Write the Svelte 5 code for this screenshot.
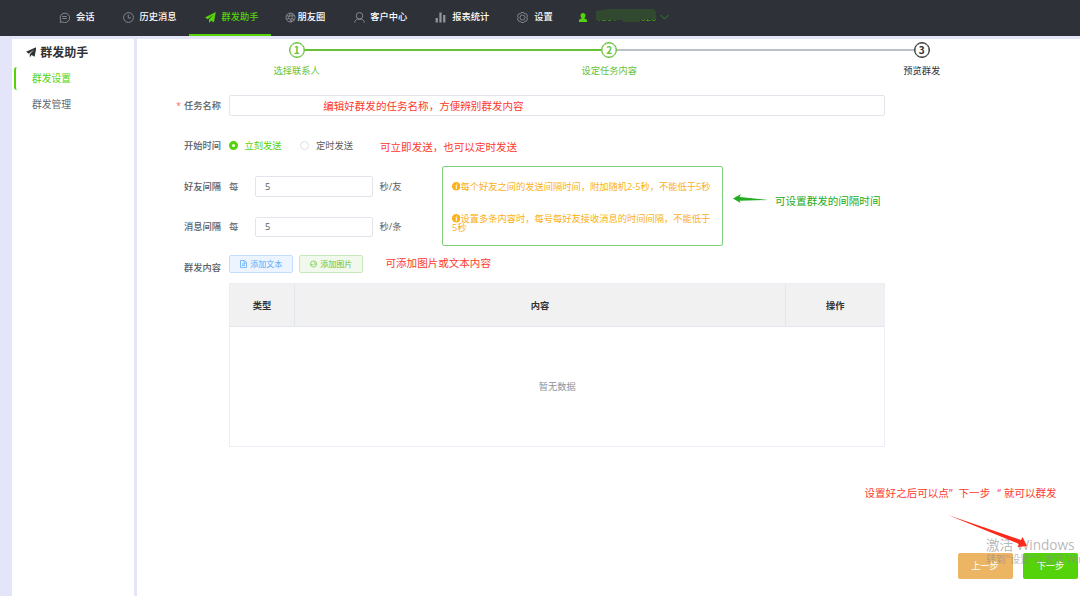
<script>
  const menus = [
    { name: "会话", icon: "chat" },
    { name: "历史消息", icon: "clock" },
    { name: "群发助手", icon: "plane" },
    { name: "朋友圈", icon: "circle" },
    { name: "客户中心", icon: "user" },
    { name: "报表统计", icon: "chart" },
    { name: "设置", icon: "gear" },
  ];

  const steps = ["选择联系人", "设定任务内容", "预览群发"];
  const current = 2;

  let activeMenu = "群发助手";
  let sendType = "now";
  let taskName = "";
  let friendGap = "5";
  let messageGap = "5";
</script>

<div class="page">
  <header>
    {#each menus as menu}
      <div class="menu {menu.icon}" class:active={menu.name === activeMenu}>
        <svg class="menu_icon" viewBox="0 0 22 22" fill="none" stroke="currentColor" stroke-width="1.7">
          {#if menu.icon === "chat"}
            <path d="M2 20.500l1.500-4A9.500 9.500 0 1 1 7 20L2 20.500z" />
            <path d="M6.500 9h9M6.500 13h9" />
          {:else if menu.icon === "clock"}
            <circle cx="11" cy="11" r="9.800" />
            <path d="M10.500 5v7H16" />
          {:else if menu.icon === "plane"}
            <path d="M21.500 0L0 11l5.500 3.500L17 5 8 15v7l4-4.500 6 3z" fill="currentColor" stroke="none" />
          {:else if menu.icon === "circle"}
            <circle cx="11" cy="11" r="9" />
            <circle cx="11" cy="11" r="3.500" />
            <path d="M8 8l3-6M14 8l5-1M15 12l3 5M11 15l-1 5M8 13l-5 1M8 9L3 7M13 8l2-5M14 14l-1 6" />
          {:else if menu.icon === "user"}
            <circle cx="11" cy="7.500" r="6.500" />
            <path d="M1.500 21.500c0-4 2-6 5-7h9c3 1 5 3 5 7" />
          {:else if menu.icon === "chart"}
            <path d="M3.500 12v9M11 1v20M18.500 6v15" stroke-width="4.500" />
          {:else}
            <path d="M8.500 1h5l1.500 2.500 3.500 0L21 8l-1.500 3L21 14l-2.500 4.500H15L13.500 21h-5L7 18.500H3.500L1 14l1.500-3L1 8l2.500-4.500H7z" />
            <circle cx="11" cy="11" r="5" />
          {/if}
        </svg>
        <span>{menu.name}</span>
      </div>
    {/each}
    <div class="account">
      <svg class="account_icon" viewBox="0 0 16 18" fill="currentColor">
        <circle cx="8" cy="5" r="5" />
        <path d="M5 8h6v3l5 2.500V18H0v-4.500L5 11z" />
      </svg>
      <div class="account_name">
        <span>1501</span><span>020</span>
        <svg class="mask" viewBox="0 0 60 14">
          <path d="M0 2L13 0h45l2 3v7H44v3H27v-2H0z" fill="#31492f" />
        </svg>
      </div>
      <svg class="arrow_down" viewBox="0 0 9 6" fill="none" stroke="currentColor"><path d="M.5 1l4 4 4-4" /></svg>
    </div>
  </header>

  <div class="body">
    <aside>
      <div class="aside_title">
        <svg viewBox="0 0 22 22" fill="currentColor"><path d="M22 0L0 10l6 4L17 5 8 15v7l3.500-5 6.500 3.500z" /></svg>
        群发助手
      </div>
      <div class="aside_item selected">群发设置</div>
      <div class="aside_item">群发管理</div>
    </aside>

    <main>
      <div class="steps">
        {#each steps as step, i}
          <div class="step" class:done={i < current} class:passed={i < current - 1}>
            <div class="step_number">{i + 1}</div>
            <div class="step_name">{step}</div>
          </div>
        {/each}
      </div>

      <div class="form">
        <div class="row">
          <div class="label"><i>*</i>任务名称</div>
          <div class="name_box">
            <input type="text" bind:value={taskName} />
            <span class="note name_note">编辑好群发的任务名称，方便辨别群发内容</span>
          </div>
        </div>

        <div class="row">
          <div class="label">开始时间</div>
          <button class="radio" class:checked={sendType === "now"} on:click={() => (sendType = "now")}>
            <span class="dot"></span>立刻发送
          </button>
          <button class="radio" class:checked={sendType === "later"} on:click={() => (sendType = "later")}>
            <span class="dot"></span>定时发送
          </button>
          <span class="note time_note">可立即发送，也可以定时发送</span>
        </div>

        <div class="intervals">
          <div class="interval_rows">
            <div class="row">
              <div class="label">好友间隔</div>
              <span class="every">每</span>
              <input class="small" type="text" bind:value={friendGap} />
              <span class="unit">秒/友</span>
            </div>
            <div class="row">
              <div class="label">消息间隔</div>
              <span class="every">每</span>
              <input class="small" type="text" bind:value={messageGap} />
              <span class="unit">秒/条</span>
            </div>
          </div>
          <div class="tips">
            {#each ["每个好友之间的发送间隔时间，附加随机2-5秒，不能低于5秒", "设置多条内容时，每号每好友接收消息的时间间隔，不能低于5秒"] as tip}
              <p>
                <svg viewBox="0 0 16 16"><circle cx="8" cy="8" r="8" fill="#fbb016" /><path d="M9.500 3l-.3 2M6.500 7H9l-1.500 5.500h2" stroke="#fff" stroke-width="1.700" fill="none" /></svg>{tip}
              </p>
            {/each}
          </div>
          <svg class="green_arrow" viewBox="0 0 35 10"><path d="M0 4.500L8 0 6.500 3 35 6 6.500 6.800 7.500 9z" fill="#22ac22" /></svg>
          <span class="note green">可设置群发的间隔时间</span>
        </div>

        <div class="row content_row">
          <div class="label">群发内容</div>
          <button class="add text">
            <svg viewBox="0 0 14 16" fill="none" stroke="currentColor" stroke-width="1.500"><path d="M1 1h8l4 4v10H1zM8 1v5h5M4 8h6M4 11h6" /></svg>添加文本
          </button>
          <button class="add image">
            <svg viewBox="0 0 16 16" fill="none" stroke="currentColor" stroke-width="1.500"><circle cx="8" cy="8" r="7" /><path d="M1 9h4l2 2 3-3h5M9 5h3" /></svg>添加图片
          </button>
          <span class="note content_note">可添加图片或文本内容</span>
        </div>

        <div class="table">
          <div class="thead">
            <div>类型</div>
            <div>内容</div>
            <div>操作</div>
          </div>
          <div class="empty">暂无数据</div>
        </div>
      </div>

      <div class="footer">
        <button class="prev">上一步</button>
        <button class="next">下一步</button>
      </div>
    </main>
  </div>

  <div class="note finish_note">设置好之后可以点”<span class="quoted">下一步</span>“<span class="rest">就可以群发</span></div>
  <div class="watermark">
    <p>激活 Windows</p>
    <p>转到"设置"以激活 Windows。</p>
  </div>
  <svg class="red_arrow" viewBox="0 0 80 33"><path d="M0 0L73 25l1.500-3L79 31l-9.500 1 1.500-3z" fill="#fc2a1c" /></svg>
</div>

<style>
  :global(body) {
    margin: 0;
    overflow: hidden;
  }
  .page, .page * {
    box-sizing: border-box;
  }
  .page {
    position: relative;
    width: 1080px;
    height: 596px;
    overflow: hidden;
    display: flex;
    flex-direction: column;
    background: #e5e5fa;
    font-family: "Open Sans", "Noto Sans CJK SC", sans-serif;
    font-size: 9.25px;
    line-height: 1;
    color: #5a5d62;
  }
  button, input {
    font: inherit;
    color: inherit;
    padding: 0;
    margin: 0;
    border: 0;
    background: none;
    white-space: nowrap;
  }
  p {
    margin: 0;
  }
  svg {
    display: block;
    flex: none;
  }
  header {
    height: 36px;
    flex: none;
    padding-left: 43px;
    background: #2e3138;
    color: #fff;
    display: flex;
    font-weight: 500;
  }
  .menu {
    display: flex;
    align-items: center;
    gap: 6px;
    padding: 0 12px 0 16px;
    border-bottom: 2px solid transparent;
    white-space: nowrap;
  }
  .menu.circle {
    padding-left: 14px;
    gap: 2px;
  }
  .menu.user {
    padding-left: 16.5px;
    gap: 5.5px;
  }
  .menu.gear {
    padding-left: 16px;
  }
  .menu_icon {
    width: 11px;
    height: 11px;
    color: #92959b;
  }
  .active {
    border-color: #55d30a;
  }
  .active, .active .menu_icon {
    color: #55d30a;
  }
  .account {
    display: flex;
    align-items: center;
    padding: 0 0 2px 14px;
    color: #55d30a;
  }
  .account_icon {
    width: 8px;
    height: 9px;
  }
  .account_name {
    position: relative;
    width: 60px;
    margin: 1px 4px 0 9.5px;
    display: flex;
    justify-content: space-between;
    color: #43a012;
  }
  .mask {
    position: absolute;
    left: 0;
    top: -4px;
    width: 60px;
    height: 14px;
  }
  .arrow_down {
    width: 9px;
    height: 6px;
    color: #2e8b18;
  }
  .body {
    flex: 1;
    display: flex;
    gap: 3px;
    padding: 3px 0 0 12.3px;
  }
  aside {
    width: 121.5px;
    background: #fff;
    padding-top: 7px;
    font-size: 9.8px;
  }
  .aside_title {
    display: flex;
    align-items: center;
    gap: 4px;
    height: 13px;
    margin-bottom: 8px;
    padding-left: 13.5px;
    font-size: 12px;
    font-weight: bold;
    color: #303236;
  }
  .aside_title svg {
    width: 10.5px;
    height: 10.5px;
  }
  .aside_item {
    display: flex;
    align-items: center;
    height: 23px;
    margin: 0 0 3px 1.4px;
    padding-left: 16.3px;
    border-left: 2px solid transparent;
    border-radius: 3px;
    color: #66686c;
  }
  .aside_item.selected {
    border-color: #55d30a;
    color: #55d30a;
  }
  main {
    flex: 1;
    display: flex;
    flex-direction: column;
    background: #fff;
  }
  .steps {
    display: flex;
    padding: 3px 2px 0 3.5px;
    height: 56px;
    flex: none;
  }
  .step {
    flex: 1;
    display: grid;
    grid-template-columns: 1fr 16px 1fr;
    grid-template-rows: 16px 1fr;
    align-items: center;
    color: #303236;
  }
  .step::before, .step::after {
    content: "";
    height: 1.4px;
    background: #bcc0cb;
  }
  .step::before {
    grid-area: 1 / 1;
  }
  .step::after {
    grid-area: 1 / 3;
  }
  .step:first-child::before, .step:last-child::after {
    visibility: hidden;
  }
  .step.done {
    color: #67c23a;
  }
  .step.done::before, .step.passed::after {
    background: #67c23a;
  }
  .step_number {
    grid-area: 1 / 2;
    width: 16px;
    height: 16px;
    border: 1.5px solid;
    border-radius: 50%;
    box-shadow: inset 0 0 0 .4px currentColor;
    display: flex;
    align-items: center;
    justify-content: center;
    font-size: 10px;
    font-weight: bold;
    font-family: "Noto Sans CJK SC", sans-serif;
  }
  .step_name {
    grid-area: 2 / 1 / 3 / 4;
    align-self: start;
    margin-top: 8px;
    text-align: center;
  }
  .row {
    display: flex;
    align-items: center;
    height: 20.5px;
    margin-bottom: 20px;
    white-space: nowrap;
  }
  .label {
    width: 84.2px;
    margin-right: 8px;
    text-align: right;
    font-weight: 500;
  }
  .label i {
    margin-right: 3px;
    color: #f56c6c;
    font-style: normal;
  }
  input {
    height: 20.5px;
    border: 1px solid #e3e5ec;
    border-radius: 2px;
    padding: 0 9px;
    background: #fff;
    outline: none;
  }
  .name_box {
    position: relative;
    width: 656.5px;
  }
  .name_box input {
    display: block;
    width: 100%;
  }
  .note {
    font-size: 10.55px;
    color: #fc3a2e;
    white-space: nowrap;
  }
  .name_note {
    position: absolute;
    left: 94.2px;
    top: 6px;
  }
  .radio {
    display: flex;
    align-items: center;
    margin-right: 19px;
  }
  .dot {
    width: 9px;
    height: 9px;
    margin-right: 6.5px;
    border: 1px solid #dcdfe6;
    border-radius: 50%;
  }
  .checked {
    color: #55d30a;
  }
  .checked .dot {
    border: 3px solid #55d30a;
  }
  .time_note {
    margin: 4px 0 0 8px;
  }
  .intervals {
    display: flex;
    align-items: flex-start;
  }
  .every {
    width: 26px;
  }
  .small {
    width: 118px;
  }
  .unit {
    width: 69px;
    padding-left: 6.5px;
  }
  .tips {
    width: 281px;
    height: 80px;
    margin: -10px 10px -20px 0;
    padding: 14.5px 9px 0;
    border: 1.5px solid #7fd07f;
    border-radius: 2px;
    color: #fbb016;
    line-height: 9px;
  }
  .tips p {
    margin-bottom: 23px;
  }
  .tips svg {
    display: inline-block;
    width: 8.5px;
    height: 8.5px;
    vertical-align: -1px;
  }
  .green_arrow {
    width: 35px;
    height: 10px;
    margin-top: 18px;
  }
  .green {
    margin: 19.5px 0 0 7px;
    color: #22ac22;
  }
  .content_row {
    margin-bottom: 5px;
  }
  .add {
    display: flex;
    align-items: center;
    justify-content: center;
    gap: 3.5px;
    width: 64px;
    height: 18px;
    margin: -7px 6px 0 0;
    border: 1px solid;
    border-radius: 2px;
    font-size: 8px;
  }
  .add svg {
    width: 7px;
    height: 8px;
  }
  .add.text {
    color: #5aa7fb;
    background: #ecf5ff;
    border-color: #bfdfff;
  }
  .add.image {
    color: #67c23a;
    background: #f0f9eb;
    border-color: #c8e9b8;
  }
  .content_note {
    margin: -8px 0 0 16.5px;
  }
  .table {
    width: 656.5px;
    height: 164px;
    margin-left: 92.2px;
    display: flex;
    flex-direction: column;
    border: 1px solid #ebeef5;
  }
  .thead {
    height: 43px;
    display: grid;
    grid-template-columns: 65px 1fr 98.5px;
    background: #f1f1f1;
    border-bottom: 1px solid #e2e6ed;
    color: #303236;
    font-weight: bold;
  }
  .thead div {
    display: flex;
    align-items: center;
    justify-content: center;
    padding-top: 2px;
    border-right: 1px solid #e2e6ed;
  }
  .thead div:last-child {
    border: 0;
  }
  .empty {
    flex: 1;
    display: flex;
    align-items: center;
    justify-content: center;
    padding-top: 1px;
    color: #909399;
  }
  .footer {
    display: flex;
    justify-content: flex-end;
    gap: 10.5px;
    margin-top: auto;
    padding: 0 2px 17px 0;
  }
  .footer button {
    width: 55px;
    height: 26px;
    border-radius: 2px;
    color: #fff;
  }
  .footer .prev {
    background: #ebb563;
  }
  .footer .next {
    background: #55d30a;
  }
  .finish_note {
    position: absolute;
    left: 864.5px;
    top: 488px;
  }
  .quoted {
    margin: 0 7px 0 6px;
  }
  .rest {
    margin-left: 3px;
  }
  .watermark {
    position: absolute;
    left: 986px;
    top: 537.5px;
    color: rgba(140, 140, 140, .62);
    font-size: 10px;
    white-space: nowrap;
  }
  .watermark p:first-child {
    margin-bottom: 2.5px;
    font-size: 13.6px;
  }
  .red_arrow {
    position: absolute;
    left: 948px;
    top: 515px;
    width: 80px;
    height: 33px;
  }
</style>
